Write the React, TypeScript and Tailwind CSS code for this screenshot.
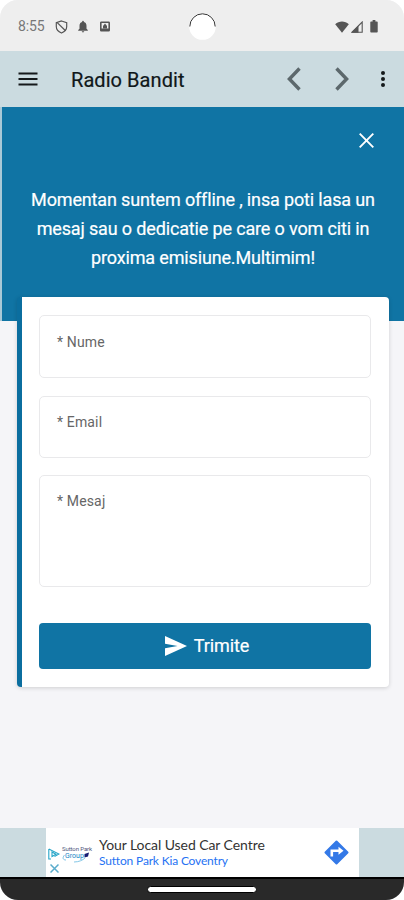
import React from 'react';

interface FieldProps {
  label: string;
  className: string;
}

const Field: React.FC<FieldProps> = ({ label, className }) => {
  return (
    <label
      className={`block w-full rounded-[5px] border border-[#e9e9eb] bg-white px-[17px] text-[14px] leading-[18px] tracking-[0.15px] text-[#666666] ${className}`}
    >
      {label}
    </label>
  );
};

const StatusBar = () => {
  return (
    <div className="relative flex h-[51px] items-center justify-between bg-[#eeeeee] pt-[2px] pr-[26px] pl-[18px] text-[#555555]">
      <div className="flex items-center">
        <span className="w-[28px] text-[14px] tracking-[-0.1px] text-[#777777]">8:55</span>
        <svg className="ml-[9px] h-[14px] w-[13px]" viewBox="0 0 13 14" fill="none" stroke="currentColor" strokeWidth="1.2">
          <path d="M6.5 1 11.7 2.6V6.5C11.7 9.5 9.5 11.8 6.5 13 3.5 11.8 1.3 9.5 1.3 6.5V2.6Z" />
          <path d="M2 2.4 10.5 10.8" />
        </svg>
        <svg className="ml-[10px] h-[13px] w-[10px]" viewBox="0 0 10 13" fill="currentColor">
          <path d="M5 .8c.6 0 .9.4.9.9v.4C7.700 2.500 8.500 4 8.500 5.800V8.800L9.800 10V10.700H.2V10L1.500 8.800V5.800C1.500 4 2.300 2.500 4.100 2.100V1.700C4.100 1.200 4.400.8 5 .8ZM3.800 11.300H6.200C6.200 12 5.700 12.500 5 12.500S3.800 12 3.800 11.300Z" />
        </svg>
        <svg className="ml-[12px] h-[11px] w-[10px]" viewBox="0 0 10 11">
          <rect x=".8" y="1.200" width="8.400" height="8.600" rx=".6" fill="none" stroke="currentColor" strokeWidth="1.600" />
          <path d="M3 7.500V5L5 2.600 7 5V7.500Z" fill="currentColor" />
          <path d="M1 7.600H9V9.800H1Z" fill="currentColor" />
        </svg>
      </div>
      <svg className="absolute top-[12px] left-[188px] h-[29px] w-[29px]" viewBox="0 0 29 29">
        <circle cx="14.500" cy="14.500" r="13.300" fill="white" />
        <path d="M1.800 14.500A12.700 12.700 0 0 1 27.200 14.500" fill="none" stroke="#333333" strokeWidth="1" />
      </svg>
      <div className="flex items-center">
        <svg className="h-[12px] w-[14px]" viewBox="0 0 14 12" fill="currentColor">
          <path d="M7 11.700.2 3.200C4-.3 10-.3 13.800 3.200Z" />
        </svg>
        <svg className="ml-[2px] h-[12px] w-[12px]" viewBox="0 0 12 12">
          <path d="M1 11.200 11.200 1V11.200Z" fill="none" stroke="currentColor" strokeWidth="1.100" />
          <path d="M.3 11.700 7.500 4.500V11.700Z" fill="currentColor" />
        </svg>
        <svg className="ml-[7px] h-[13px] w-[8px]" viewBox="0 0 8 14" fill="currentColor">
          <path d="M2.500 0H5.500V1.500H7.200C7.700 1.500 8 1.800 8 2.300V12.700C8 13.200 7.700 13.500 7.200 13.500H.8C.3 13.500 0 13.200 0 12.700V2.300C0 1.800.3 1.500.8 1.500H2.500Z" />
        </svg>
      </div>
    </div>
  );
};

const AppBar = () => {
  return (
    <header className="flex h-[56px] items-center bg-[#cbdbe0] pl-[18px]">
      <svg className="h-[14px] w-[20px]" viewBox="0 0 20 14" stroke="#15191b" strokeWidth="2">
        <path d="M.5 1.500H19.500M.5 7H19.500M.5 12.500H19.500" />
      </svg>
      <h1 className="ml-[33px] w-[210px] pt-[1px] text-[20px] font-normal tracking-[0.06px] text-[#101719] [-webkit-text-stroke:0.2px_#101719]">
        Radio Bandit
      </h1>
      <svg className="ml-[6px] h-[24px] w-[14px]" viewBox="0 0 14 24" fill="none" stroke="#5c686c" strokeWidth="3.400">
        <path d="M12.500 1.500 2.400 12 12.500 22.500" />
      </svg>
      <svg className="ml-[34px] h-[24px] w-[14px]" viewBox="0 0 14 24" fill="none" stroke="#5c686c" strokeWidth="3.400">
        <path d="M1.500 1.500 11.600 12 1.500 22.500" />
      </svg>
      <svg className="ml-[32px] h-[18px] w-[4px]" viewBox="0 0 4 18" fill="#15191b">
        <circle cx="2" cy="3" r="2" />
        <circle cx="2" cy="9" r="2" />
        <circle cx="2" cy="15" r="2" />
      </svg>
    </header>
  );
};

const MessageForm = () => {
  return (
    <section className="mr-[15px] ml-[17px] -mt-[24px] h-[390px] rounded-[4px] border-l-[5px] border-[#0b6e9f] bg-white pt-[18px] pr-[18px] pl-[17px] shadow-[0_1px_4px_rgba(0,0,0,0.16)]">
      <div className="flex flex-col">
        <Field label="* Nume" className="h-[63px] pt-[17px]" />
        <Field label="* Email" className="mt-[18px] h-[62px] pt-[16px]" />
        <Field label="* Mesaj" className="mt-[17px] h-[112px] pt-[16px]" />
        <button className="mt-[36px] flex h-[46px] items-center justify-center rounded-[4px] bg-[#1074a4] pb-px pl-[4px] text-[18px] text-white">
          <svg className="mr-[7px] h-[20px] w-[22px]" viewBox="0 0 22 20" fill="currentColor">
            <path d="M0 0 22 10 0 20V12.300L12.500 10 0 7.700Z" />
          </svg>
          <span className="tracking-[-0.1px] [-webkit-text-stroke:0.2px_white]">Trimite</span>
        </button>
      </div>
    </section>
  );
};

const AdBanner = () => {
  return (
    <div className="flex h-[49px] bg-[#cbdbe0] pr-[45px] pl-[46px]">
      <div className="flex h-full w-full bg-white">
        <div className="flex w-[14px] flex-col items-end pt-[20px]">
          <svg className="h-[12px] w-[12px]" viewBox="0 0 12 12" fill="none" stroke="#24a5c8" strokeWidth="1.100">
            <path d="M.8 1V11H3M.8 1 11 6 6.500 8.500" />
            <path d="M4 4V8.500L8 6.200Z" />
          </svg>
          <svg className="mt-[4px] mr-[1px] h-[9px] w-[9px]" viewBox="0 0 9 9" stroke="#5aaccc" strokeWidth="1.500">
            <path d="M.5.5 8.500 8.500M8.500.5.500 8.500" />
          </svg>
        </div>
        <div className="relative ml-[2px] w-[30px] pt-[17px]">
          <p className="text-[6px] leading-[7px] tracking-[-0.1px] whitespace-nowrap text-[#50557c]">Sutton Park</p>
          <p className="pl-[3px] text-[7px] leading-[8px] text-[#1685c5]">Group</p>
          <svg className="absolute top-[24px] left-0 h-[11px] w-[30px]" viewBox="0 0 30 11" fill="none">
            <path d="M2.500 3C0 6 1 8 4 8M12 10C17 10 21 8 23 6" stroke="#63b7df" strokeWidth=".8" />
            <path d="M22.500 2 27 .5 26 4.500 22.500 5.500Z" fill="#161c73" />
          </svg>
        </div>
        <div className="ml-[7px] flex w-[220px] flex-col pt-[8px] font-['Lato',sans-serif]">
          <span className="text-[14px] leading-[17px] tracking-[-0.07px] whitespace-nowrap text-[#333333]">Your Local Used Car Centre</span>
          <span className="text-[12px] leading-[15px] tracking-[-0.17px] whitespace-nowrap text-[#2572f3]">Sutton Park Kia Coventry</span>
        </div>
        <svg className="mt-[11px] ml-[4px] h-[27px] w-[27px]" viewBox="0 0 27 27">
          <rect x="4.700" y="4.700" width="17.600" height="17.600" rx="1" transform="rotate(45 13.500 13.500)" fill="#3479e7" />
          <path d="M8.800 17.500V11.700H16" stroke="white" strokeWidth="2.600" fill="none" />
          <path d="M15.500 7.700 20.500 11.700 15.500 15.700Z" fill="white" />
        </svg>
      </div>
    </div>
  );
};

const App = () => {
  return (
    <div className="flex h-[900px] w-[404px] flex-col overflow-hidden rounded-[18px] bg-[#f5f5f8] font-['Roboto',sans-serif]">
      <StatusBar />
      <AppBar />
      <main className="min-h-0 flex-1">
        <div className="h-[214px] border-l-2 border-[#a9c9d7] bg-[#1074a4] text-white">
          <div className="flex justify-end pt-[26px] pr-[30px]">
            <svg className="h-[15px] w-[15px]" viewBox="0 0 15 15" stroke="white" strokeWidth="1.900">
              <path d="M.7.7 14.300 14.300M14.300.7.700 14.300" />
            </svg>
          </div>
          <p className="mt-[37px] text-center text-[18px] leading-[29px] tracking-[-0.15px] [-webkit-text-stroke:0.2px_white]">
            Momentan suntem offline , insa poti lasa un
            <br />
            mesaj sau o dedicatie pe care o vom citi in
            <br />
            proxima emisiune.Multimim!
          </p>
        </div>
        <MessageForm />
      </main>
      <AdBanner />
      <nav className="flex h-[23px] justify-center border-t-2 border-black bg-[#292929] pt-[7px]">
        <div className="h-[7px] w-[110px] rounded-full border border-black bg-white" />
      </nav>
    </div>
  );
};

export default App;
